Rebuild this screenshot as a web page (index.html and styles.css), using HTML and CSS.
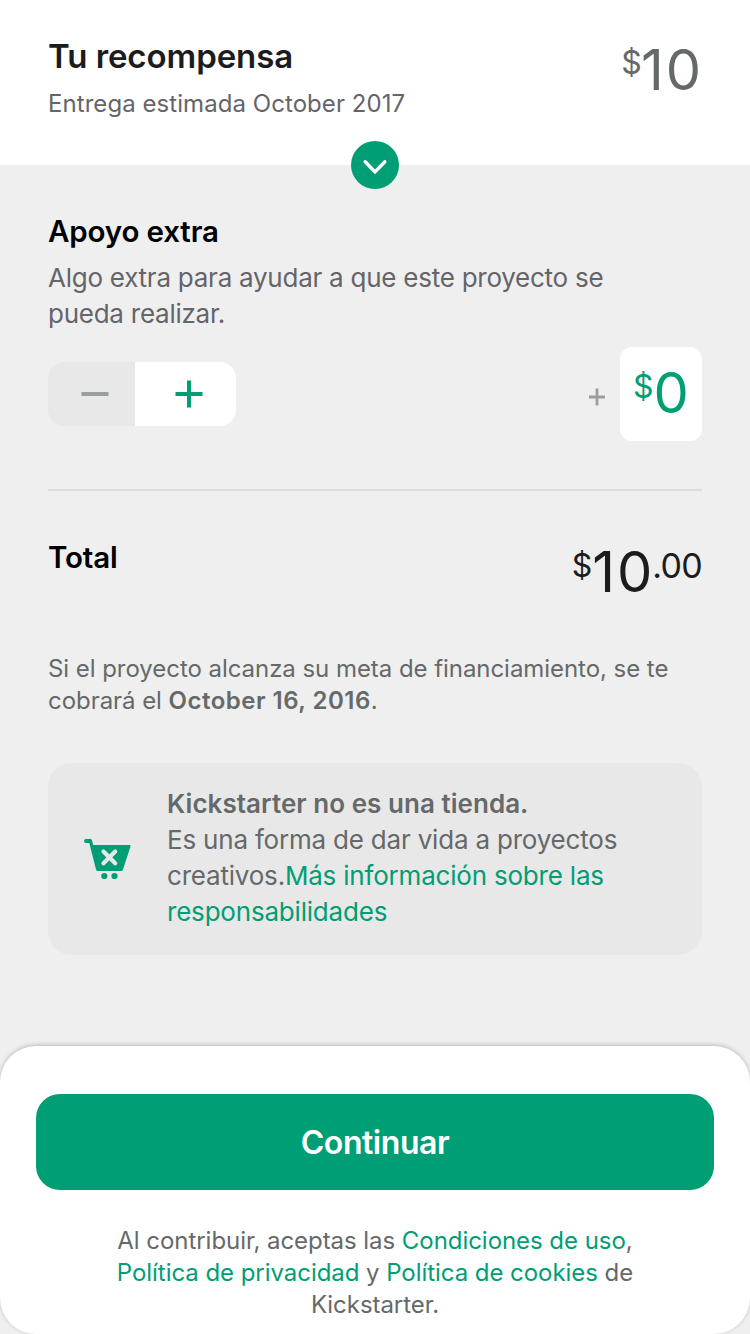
FILE: index.html
```html
<!DOCTYPE html>
<html lang="es">
<head>
<meta charset="utf-8">
<title>Tu recompensa</title>
<link rel="stylesheet" href="styles.css">
</head>
<body>
<div class="screen">
  <header class="reward">
    <div>
      <h1 class="reward-title">Tu recompensa</h1>
      <p class="reward-date">Entrega estimada October 2017</p>
    </div>
    <div class="amount reward-amount"><span class="currency">$</span><span class="whole">10</span></div>
    <button class="expand" aria-label="Expandir"><svg width="48" height="48" viewBox="0 0 48 48"><path d="M14.200 20.800 24 30.900 33.800 20.800" fill="none" stroke="#fff" stroke-width="3.400" stroke-linecap="round"/></svg></button>
  </header>
  <main class="content">
    <section class="bonus">
      <h2 class="heading">Apoyo extra</h2>
      <p class="bonus-text">Algo extra para ayudar a que este proyecto se<br>pueda realizar.</p>
      <div class="bonus-row">
        <div class="stepper">
          <button class="step minus" aria-label="Menos"><svg width="28" height="28" viewBox="0 0 28 28"><path d="M0.500 14h27" stroke="#9b9e9e" stroke-width="4"/></svg></button>
          <button class="step plus" aria-label="Más"><svg width="28" height="28" viewBox="0 0 28 28"><path d="M0.500 14h27M14 0.500v27" stroke="#009e74" stroke-width="4"/></svg></button>
        </div>
        <div class="bonus-value">
          <svg class="add" width="18" height="18" viewBox="0 0 18 18"><path d="M1 9h16M9 0.500v17" stroke="#9b9e9e" stroke-width="2.800"/></svg>
          <div class="amount value-box"><span class="currency">$</span><span>0</span></div>
        </div>
      </div>
    </section>
    <section class="total">
      <h2 class="heading">Total</h2>
      <div class="amount total-amount"><span class="currency">$</span><span class="whole">10</span><span class="cents">.00</span></div>
    </section>
    <p class="charge">Si el proyecto alcanza su meta de financiamiento, se te<br>cobrará el <b>October 16, 2016</b>.</p>
    <section class="notice">
      <svg class="cart" width="48" height="42" viewBox="0 0 48 42"><path d="M2 1H6.500Q7.600 1 8 2.400L9.200 7H45.500Q47 7 46.500 8.600L39 31.500Q38.400 33 37 33H14Q12.400 33 12 31.500L5.300 5H2A2 2 0 0 1 2 1z" fill="#009e74"/><circle cx="20.300" cy="38" r="3.100" fill="#009e74"/><circle cx="30.500" cy="38" r="3.100" fill="#009e74"/><path d="m19.500 13.500 11.700 11.700M31.200 13.500 19.500 25.200" stroke="#e8e8e8" stroke-width="4.200" stroke-linecap="round"/></svg>
      <p class="notice-text"><b>Kickstarter no es una tienda.</b><br>Es una forma de dar vida a proyectos<br>creativos.<a>Más información sobre las</a><br><a>responsabilidades</a></p>
    </section>
  </main>
  <footer class="sheet">
    <button class="continue">Continuar</button>
    <p class="terms">Al contribuir, aceptas las <a>Condiciones de uso</a>,<br><a>Política de privacidad</a> y <a>Política de cookies</a> de<br>Kickstarter.</p>
  </footer>
</div>
</body>
</html>
```
FILE: styles.css
```css
* { box-sizing: border-box; }
body { margin: 0; font-family: Inter, Roboto, sans-serif; color: #656969; background: #efefef; }
h1, h2, p { margin: 0; }
button { border: 0; padding: 0; font: inherit; }
a { color: #009e74; }
svg { display: block; }
b { font-weight: 600; }
.screen { width: 750px; height: 1334px; display: flex; flex-direction: column; overflow: hidden; }
.reward { position: relative; height: 165px; flex: none; padding: 38px 47px 0 48px; background: #fff; display: flex; justify-content: space-between; }
.reward-title { font-size: 33px; line-height: 36px; font-weight: 600; letter-spacing: -.08px; color: #1c1c1e; white-space: nowrap; }
.reward-date { margin-top: 14px; font-size: 24px; line-height: 32px; letter-spacing: .06px; color: #656469; }
.expand { position: absolute; left: 351px; top: 141px; width: 48px; height: 48px; border-radius: 50%; background: #009e74; z-index: 1; }
.amount { display: flex; align-items: flex-start; font-size: 56px; line-height: 64px; white-space: nowrap; }
.whole { letter-spacing: 2px; }
.currency { font-size: 32px; line-height: 50px; }
.reward-amount .currency { margin-right: -1px; }
.content { padding: 0 48px; height: 881px; flex: none; }
.bonus { height: 326px; padding-top: 48px; border-bottom: 2px solid #dcdcdc; }
.heading { font-size: 29.500px; line-height: 36px; font-weight: 600; letter-spacing: -.15px; color: #000; white-space: nowrap; }
.bonus-text { margin-top: 11px; font-size: 26px; line-height: 36px; letter-spacing: -.25px; color: #656469; white-space: nowrap; }
.bonus-row { margin-top: 15px; display: flex; justify-content: space-between; align-items: center; height: 94px; }
.stepper { display: flex; width: 188px; height: 64px; border-radius: 16px; overflow: hidden; background: #e8e8e8; }
.step { display: flex; align-items: center; justify-content: center; background: transparent; }
.minus { width: 87px; padding-left: 7px; }
.plus { width: 101px; background: #fff; padding-left: 7px; }
.bonus-value { display: flex; align-items: center; gap: 14px; }
.add { margin-top: 5px; }
.value-box { width: 82px; height: 94px; padding-top: 14px; justify-content: center; background: #fff; color: #009e74; border-radius: 12px; }
.value-box .currency { line-height: 52px; }
.total { height: 162px; padding-top: 48px; display: flex; justify-content: space-between; }
.total-amount { color: #1c1c1e; margin-top: 1px; }
.total-amount .currency, .cents { line-height: 51px; }
.cents { margin-left: -2px; font-size: 34px; letter-spacing: -.7px; }
.charge { font-size: 24px; line-height: 32px; letter-spacing: -.05px; white-space: nowrap; }
.charge b { letter-spacing: .5px; }
.notice { margin-top: 46px; height: 192px; border-radius: 24px; background: #e8e8e8; display: flex; padding: 22px 36px; }
.cart { flex: none; margin: 53px 35px 0 0; }
.notice-text { padding-top: 1px; font-size: 26px; line-height: 36px; letter-spacing: -.2px; white-space: nowrap; }
.notice-text b { letter-spacing: .04px; }
.sheet { flex: none; height: 288px; padding: 48px 36px 0; background: #fff; border-radius: 36px; box-shadow: 0 -1px 4px rgba(0,0,0,.22); }
.continue { display: block; width: 678px; height: 96px; border-radius: 24px; background: #009e74; color: #fff; font-size: 32px; font-weight: 600; letter-spacing: -.45px; }
.terms { margin-top: 35px; font-size: 24px; line-height: 32px; letter-spacing: -.05px; text-align: center; white-space: nowrap; }
```
